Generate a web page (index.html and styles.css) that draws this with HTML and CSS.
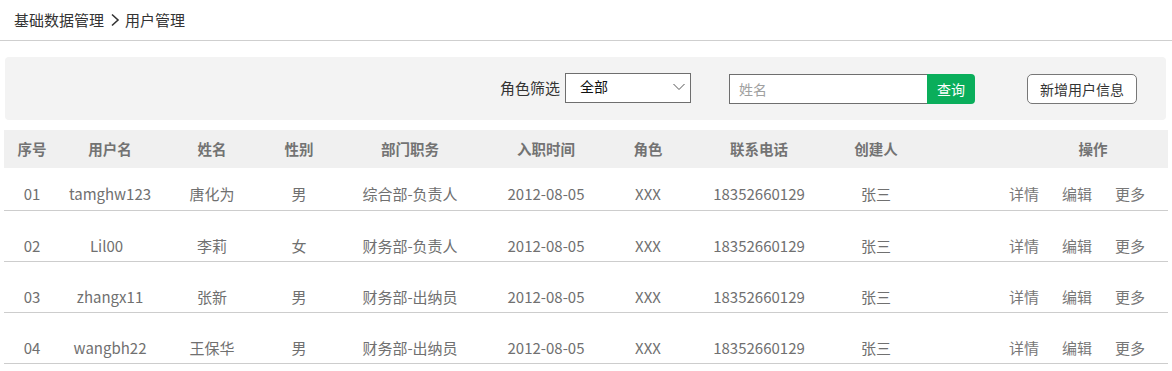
FILE: index.html
```html
<!DOCTYPE html>
<html lang="zh-CN">
<head>
<meta charset="utf-8">
<title>用户管理</title>
<link rel="stylesheet" href="styles.css">
</head>
<body>
<div class="crumb">
  <span class="crumb-item">基础数据管理</span>
  <svg class="crumb-sep" width="10" height="14" viewBox="0 0 10 14"><path d="M2 1.5 L8 7 L2 12.5" fill="none" stroke="#333" stroke-width="1.6"/></svg>
  <span class="crumb-item">用户管理</span>
</div>
<div class="content">
  <div class="filter">
    <span class="filter-label">角色筛选</span>
    <div class="select">
      <span class="select-value">全部</span>
      <svg class="select-arrow" width="12" height="8" viewBox="0 0 12 8"><path d="M0.5 1 L6 6.5 L11.5 1" fill="none" stroke="#555" stroke-width="1"/></svg>
    </div>
    <div class="search">
      <span class="search-input">姓名</span>
      <span class="search-btn">查询</span>
    </div>
    <span class="add-btn">新增用户信息</span>
  </div>
  <div class="table">
    <div class="row head">
      <span>序号</span><span>用户名</span><span>姓名</span><span>性别</span><span>部门职务</span><span>入职时间</span><span>角色</span><span>联系电话</span><span>创建人</span><span></span><span class="op-head">操作</span>
    </div>
    <div class="row body first">
      <span>01</span><span>tamghw123</span><span>唐化为</span><span>男</span><span>综合部-负责人</span><span>2012-08-05</span><span>XXX</span><span>18352660129</span><span>张三</span><span></span><span class="ops"><a>详情</a><a>编辑</a><a>更多</a></span>
    </div>
    <div class="row body">
      <span>02</span><span class="uname-short">Lil00</span><span>李莉</span><span>女</span><span>财务部-负责人</span><span>2012-08-05</span><span>XXX</span><span>18352660129</span><span>张三</span><span></span><span class="ops"><a>详情</a><a>编辑</a><a>更多</a></span>
    </div>
    <div class="row body">
      <span>03</span><span>zhangx11</span><span>张新</span><span>男</span><span>财务部-出纳员</span><span>2012-08-05</span><span>XXX</span><span>18352660129</span><span>张三</span><span></span><span class="ops"><a>详情</a><a>编辑</a><a>更多</a></span>
    </div>
    <div class="row body">
      <span>04</span><span>wangbh22</span><span>王保华</span><span>男</span><span>财务部-出纳员</span><span>2012-08-05</span><span>XXX</span><span>18352660129</span><span>张三</span><span></span><span class="ops"><a>详情</a><a>编辑</a><a>更多</a></span>
    </div>
  </div>
</div>
</body>
</html>
```

FILE: styles.css
```css
* { box-sizing: border-box; }
html, body { margin: 0; padding: 0; background: #fff; }
body {
  font-family: "Microsoft YaHei", "Noto Sans CJK SC", "Noto Sans", sans-serif;
  font-size: 15px;
  color: #333;
  width: 1172px;
  height: 371px;
  overflow: hidden;
}
.crumb {
  height: 41px;
  border-bottom: 1px solid #cfcfcf;
  display: flex;
  align-items: center;
  padding: 0 0 1px 14px;
  line-height: 20px;
  color: #333;
}
.crumb-sep { margin: 0 5px 0 6px; }
.content { padding: 16px 4px 0 4px; }
.filter {
  height: 63px;
  margin: 0 2px 0 1px;
  background: #f3f3f3;
  border-radius: 4px;
  display: flex;
  align-items: center;
  justify-content: flex-end;
  padding: 0 29px 2px 0;
}
.filter-label { margin-right: 5px; color: #333; line-height: 20px; }
.select {
  width: 126px;
  height: 30px;
  border: 1px solid #6e6e6e;
  background: #fff;
  display: flex;
  align-items: center;
  justify-content: space-between;
  padding: 0 5px 0 14px;
  font-size: 14px;
  color: #111;
}
.select-value { margin-top: -3px; }
.select-arrow { margin-top: -2px; }
.search { display: flex; margin: 2px 0 0 38px; height: 30px; }
.search-input {
  width: 198px;
  height: 30px;
  border: 1px solid #6e6e6e;
  border-right: none;
  background: #fff;
  color: #a0a0a0;
  font-size: 14px;
  padding: 0 0 0 9px;
  display: flex;
  align-items: center;
}
.search-btn {
  width: 48px;
  height: 30px;
  background: #0aae5b;
  color: #fff;
  font-size: 14px;
  border-radius: 0 4px 4px 0;
  display: flex;
  align-items: center;
  justify-content: center;
}
.add-btn {
  margin: 2px 0 0 52px;
  width: 110px;
  height: 30px;
  border: 1px solid #777;
  border-radius: 5px;
  background: #fff;
  color: #333;
  font-size: 14px;
  display: flex;
  align-items: center;
  justify-content: center;
}
.table { margin-top: 10px; }
.row {
  display: grid;
  grid-template-columns: 56px 100px 104px 70px 152px 120px 84px 138px 96px 76px 168px;
  text-align: center;
  line-height: 20px;
}
.row.head {
  height: 38px;
  background: #f0f0f0;
  align-items: center;
  font-weight: bold;
  color: #737373;
  font-size: 14.5px;
}
.op-head { padding-left: 18px; }
.row.body {
  height: 51px;
  border-bottom: 1px solid #cdcdcd;
  align-items: end;
  padding-bottom: 5px;
  color: #707070;
}
.row.body.first { height: 43px; padding-bottom: 6px; }
.uname-short { padding-right: 7px; }
.ops {
  display: flex;
  justify-content: flex-start;
  padding-left: 9px;
  gap: 23px;
  color: #777;
}
.ops a { cursor: pointer; }
```
